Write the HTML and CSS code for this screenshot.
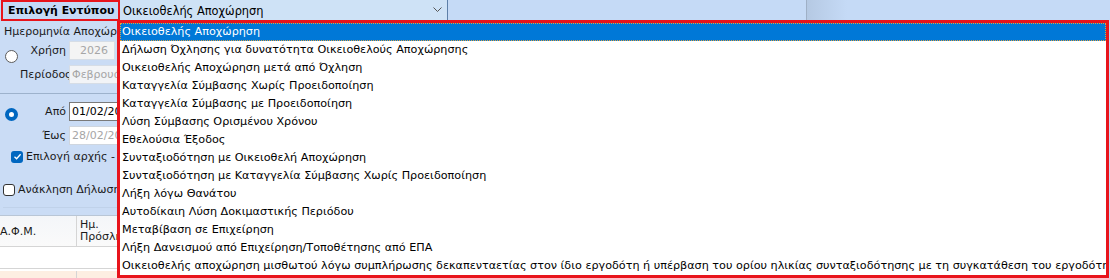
FILE: index.html
```html
<!DOCTYPE html>
<html lang="el">
<head>
    <meta charset="UTF-8">
    <title>Επιλογή Εντύπου</title>
    <link rel="stylesheet" href="styles.css">
</head>
<body>
    <div class="topbar">
        <div class="form-label">Επιλογή Εντύπου</div>
        <div class="combo">
            <span>Οικειοθελής Αποχώρηση</span>
            <svg class="chevron" width="9" height="6" viewBox="0 0 9 6"><path d="M0.5 0.5 L4.5 4.5 L8.5 0.5" fill="none" stroke="#555" stroke-width="1"/></svg>
        </div>
        <div class="bar-rest"><div class="bar-split"></div></div>
    </div>

    <div class="panel">
        <div class="group">
            <div class="group-title">Ημερομηνία Αποχώρησης</div>
            <div class="group-body">
                <span class="radio"></span>
                <div class="fields">
                    <div class="field">
                        <label>Χρήση</label>
                        <div class="input disabled num">2026</div>
                    </div>
                    <div class="field">
                        <label>Περίοδος</label>
                        <div class="input disabled">Φεβρουάριος</div>
                    </div>
                </div>
            </div>
        </div>

        <div class="group group-second">
            <div class="group-body">
                <span class="radio checked"></span>
                <div class="fields">
                    <div class="field">
                        <label>Από</label>
                        <div class="input active">01/02/2026</div>
                    </div>
                    <div class="field">
                        <label>Έως</label>
                        <div class="input faded">28/02/2026</div>
                    </div>
                </div>
            </div>
            <div class="check-row">
                <span class="checkbox checked">
                    <svg width="9" height="9" viewBox="0 0 9 9"><path d="M1.5 4.8 L3.6 6.8 L7.6 2.2" fill="none" stroke="#fff" stroke-width="1.3"/></svg>
                </span>
                <span>Επιλογή αρχής - τέλους</span>
            </div>
        </div>

        <div class="recall-row">
            <span class="checkbox"></span>
            <span>Ανάκληση Δήλωσης</span>
        </div>
    </div>

    <div class="grid">
        <div class="grid-head">
            <div class="col col-afm">Α.Φ.Μ.</div>
            <div class="col col-date">Ημ.<br>Πρόσληψης</div>
        </div>
        <div class="grid-row"></div>
        <div class="grid-row peach">
            <div class="col col-afm"></div>
            <div class="col col-date"></div>
        </div>
    </div>

    <ul class="dropdown">
        <li class="selected">Οικειοθελής Αποχώρηση</li>
        <li>Δήλωση Όχλησης για δυνατότητα Οικειοθελούς Αποχώρησης</li>
        <li>Οικειοθελής Αποχώρηση μετά από Όχληση</li>
        <li>Καταγγελία Σύμβασης Χωρίς Προειδοποίηση</li>
        <li>Καταγγελία Σύμβασης με Προειδοποίηση</li>
        <li>Λύση Σύμβασης Ορισμένου Χρόνου</li>
        <li>Εθελούσια Έξοδος</li>
        <li>Συνταξιοδότηση με Οικειοθελή Αποχώρηση</li>
        <li>Συνταξιοδότηση με Καταγγελία Σύμβασης Χωρίς Προειδοποίηση</li>
        <li>Λήξη λόγω Θανάτου</li>
        <li>Αυτοδίκαιη Λύση Δοκιμαστικής Περιόδου</li>
        <li>Μεταβίβαση σε Επιχείρηση</li>
        <li>Λήξη Δανεισμού από Επιχείρηση/Τοποθέτησης από ΕΠΑ</li>
        <li>Οικειοθελής αποχώρηση μισθωτού λόγω συμπλήρωσης δεκαπενταετίας στον ίδιο εργοδότη ή υπέρβαση του ορίου ηλικίας συνταξιοδότησης με τη συγκατάθεση του εργοδότη</li>
    </ul>
</body>
</html>
```

FILE: styles.css
```css
body {
    margin: 0;
    width: 1110px;
    height: 278px;
    overflow: hidden;
    position: relative;
    background-color: #cadcf5;
    font-family: "DejaVu Sans", Tahoma, sans-serif;
    font-size: 11px;
    color: #1a1a1a;
}
.topbar {
    display: flex;
    height: 21px;
    background-color: #c5daf6;
}
.form-label {
    box-sizing: border-box;
    flex: none;
    width: 119px;
    margin-left: 1px;
    height: 21px;
    border: 2px solid #e8141c;
    padding-left: 5px;
    font-weight: bold;
    font-size: 10.9px;
    line-height: 17px;
    color: #000;
    white-space: nowrap;
    overflow: hidden;
}
.combo {
    box-sizing: border-box;
    flex: none;
    width: 328px;
    height: 21px;
    display: flex;
    align-items: center;
    justify-content: space-between;
    padding: 0 5px 0 3px;
    background-color: #cee2f6;
    border-right: 1px solid #5d7fa8;
    color: #000;
    font-size: 11.4px;
}
.chevron {
    margin-bottom: 1px;
}
.bar-rest {
    flex: 1;
    display: flex;
}
.bar-split {
    margin-left: 358px;
    width: 40px;
    border-left: 1px solid #9fb0c6;
    background: linear-gradient(to right, #b5c9e3, #c5daf6);
}
.panel {
    width: 117px;
    height: 194px;
    overflow: hidden;
}
.group-title {
    padding: 4px 0 0 4px;
    height: 14px;
    white-space: nowrap;
}
.group-body {
    display: flex;
    align-items: flex-start;
}
.fields {
    display: flex;
    flex-direction: column;
    gap: 5px;
}
.field {
    display: flex;
    align-items: center;
    gap: 3px;
}
.field label {
    width: 46px;
    text-align: right;
    white-space: nowrap;
}
.input {
    box-sizing: border-box;
    width: 90px;
    height: 19px;
    padding: 0 2px;
    line-height: 17px;
    border: 1px solid #d6dde6;
    background-color: #f2f4f7;
    color: #a6a6a6;
    white-space: nowrap;
    overflow: hidden;
}
.input.num {
    width: 46px;
    text-align: right;
    padding-right: 6px;
    background-color: #f4f4f4;
}
.input.active {
    border-color: #7a7a7a;
    background-color: #fff;
    color: #000;
}
.input.faded {
    border-color: #cfd6df;
    background-color: #fff;
}
.radio {
    box-sizing: border-box;
    flex: none;
    width: 13px;
    height: 13px;
    margin: 9px 2px 0 5px;
    border-radius: 50%;
    border: 1px solid #5c5c5c;
    background-color: #fff;
}
.radio.checked {
    margin-top: 6px;
    border: 4px solid #0067c0;
}
.group:first-child {
    height: 72px;
    border-bottom: 1px solid #9db2cc;
}
.group:first-child .group-body {
    margin-top: 2px;
}
.group-second .group-body {
    margin-top: 8px;
}
.check-row {
    display: flex;
    align-items: center;
    gap: 3px;
    margin: 5px 0 0 11px;
    white-space: nowrap;
}
.checkbox {
    box-sizing: border-box;
    flex: none;
    width: 12px;
    height: 12px;
    display: flex;
    align-items: center;
    justify-content: center;
    border: 1px solid #333;
    border-radius: 3px;
    background-color: #fff;
}
.checkbox.checked {
    border: none;
    background-color: #0067c0;
}
.recall-row {
    display: flex;
    align-items: center;
    gap: 3px;
    margin: 20px 0 0 3px;
    padding-bottom: 11px;
    border-bottom: 1px solid #c0d2ea;
    white-space: nowrap;
}
.grid {
    width: 117px;
    overflow: hidden;
    background-color: #fff;
}
.grid-head {
    display: flex;
    height: 30px;
    background: linear-gradient(#f4f6f9, #fafafa);
    border-top: 1px solid #b9c6d6;
    border-bottom: 1px solid #d5d5d5;
}
.col {
    box-sizing: border-box;
    flex: none;
    height: 100%;
}
.col-afm {
    width: 77px;
    display: flex;
    align-items: center;
    border-right: 1px solid #d5d5d5;
}
.col-date {
    padding: 3px 0 0 3px;
    line-height: 12px;
    white-space: nowrap;
}
.grid-row {
    height: 21px;
    border-bottom: 1px solid #d5d5d5;
}
.grid-row.peach {
    display: flex;
    height: 10px;
    margin-top: 2px;
    border-bottom: none;
    background-color: #fdeee2;
}
.dropdown {
    position: absolute;
    left: 117px;
    top: 20px;
    box-sizing: border-box;
    width: 992px;
    margin: 0;
    padding: 0;
    list-style: none;
    border: 3px solid #e8141c;
    background-color: #fff;
    color: #000;
    font-size: 11.2px;
}
.dropdown li {
    height: 18px;
    line-height: 18px;
    padding-left: 2px;
    white-space: nowrap;
    overflow: hidden;
}
.dropdown li.selected {
    box-sizing: border-box;
    line-height: 16px;
    background-color: #0078d7;
    color: #fff;
    border: 1px dotted #e0a040;
    padding-left: 1px;
}
```
